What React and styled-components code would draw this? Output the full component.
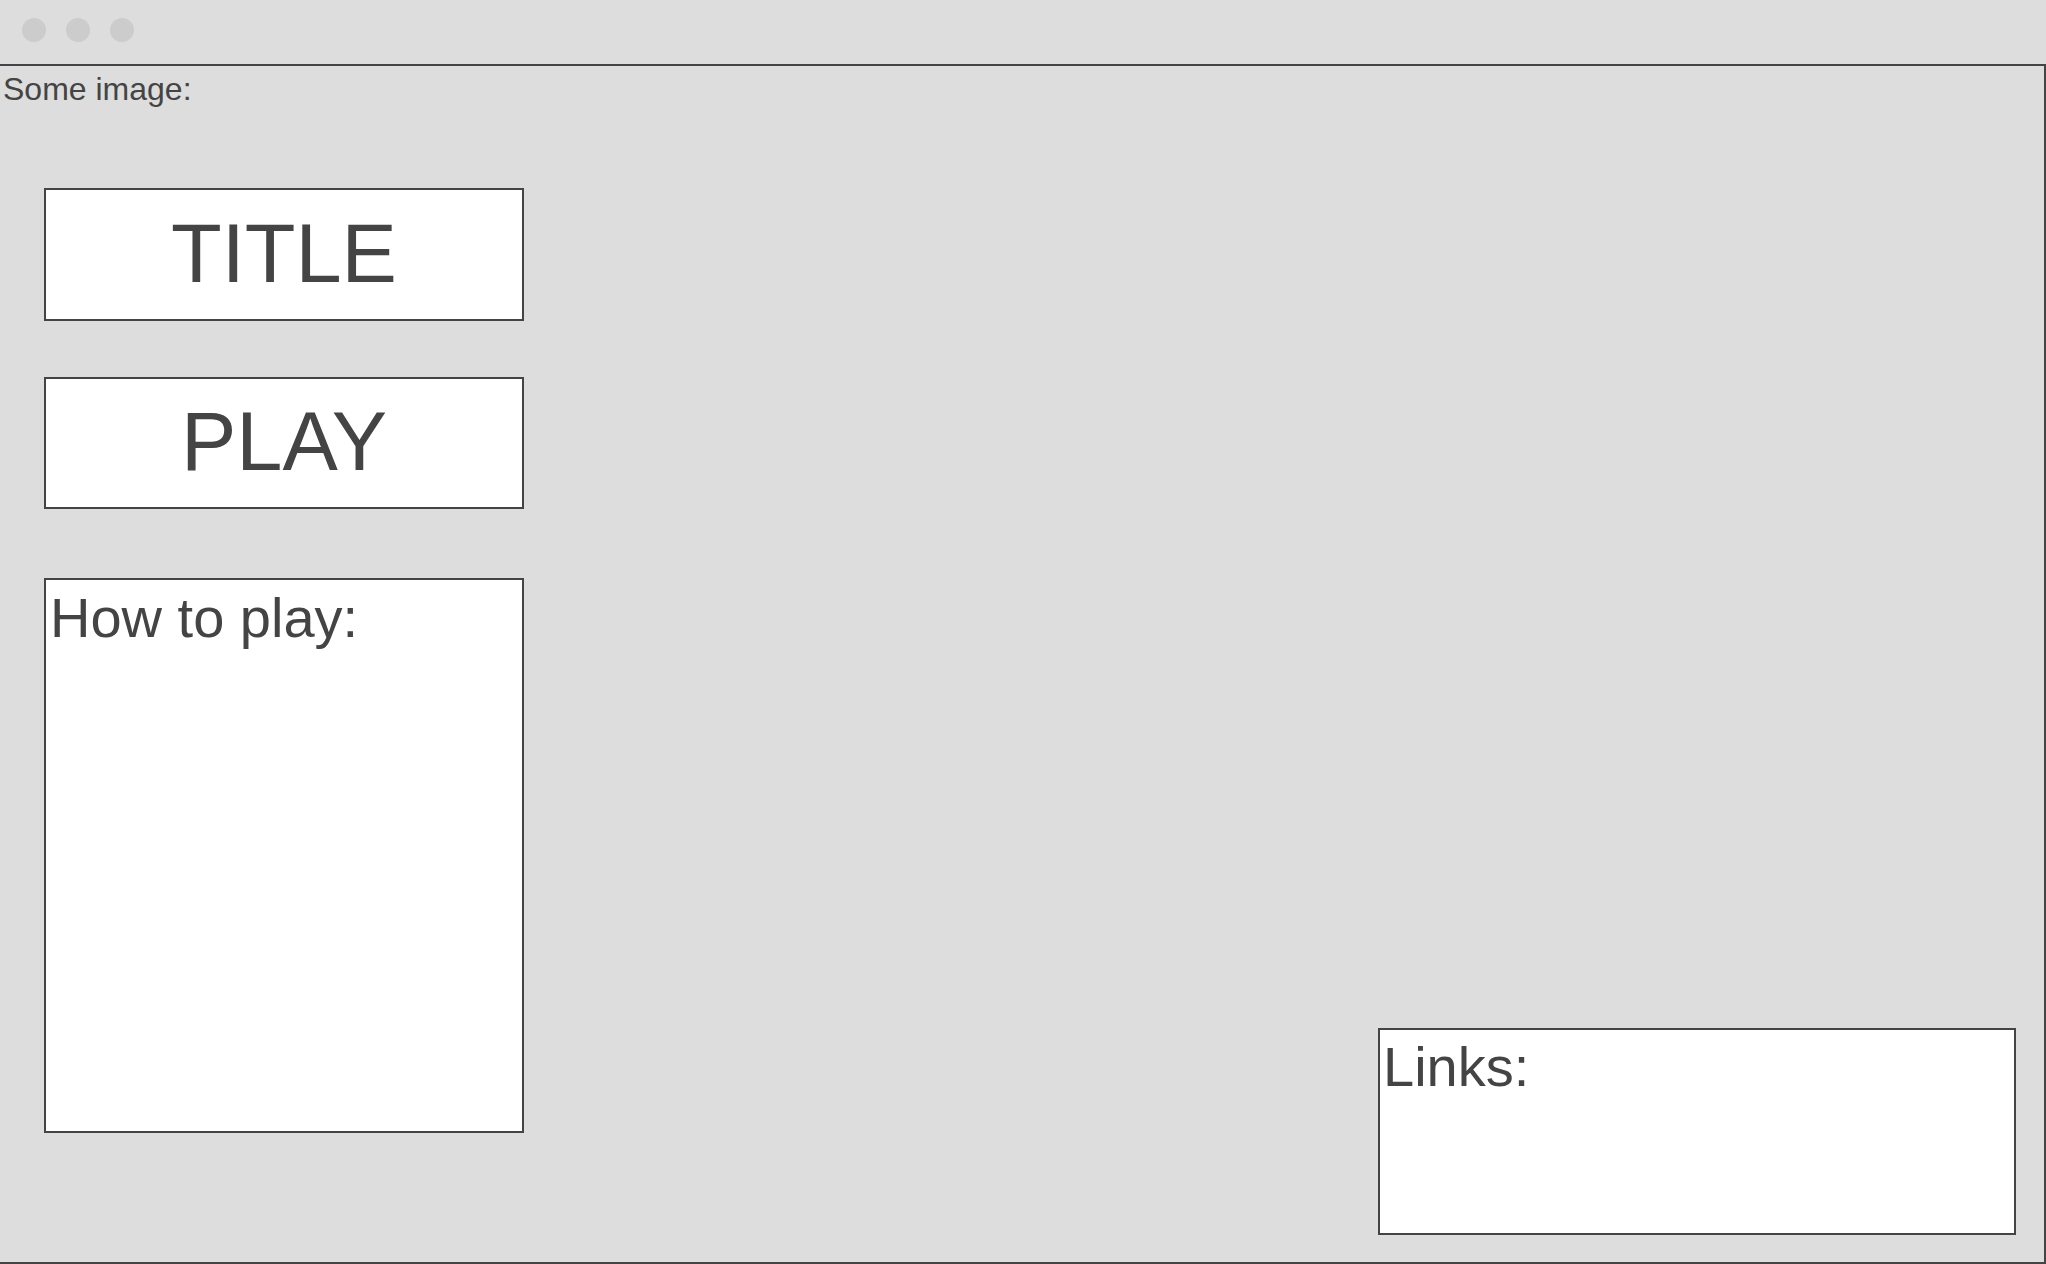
import { createGlobalStyle } from "styled-components";
import styled from "styled-components";

const GlobalStyle = createGlobalStyle`
	html, body {
		margin: 0;
		padding: 0;
		background-color: #dddddd;
		overflow: hidden;
	}
	body {
		font-family: "Liberation Sans", Arial, sans-serif;
		color: #444444;
	}
`;

const Screen = styled.div`
	width: 2046px;
	height: 1264px;
	display: flex;
	flex-direction: column;
	background-color: #dddddd;
`;

const TitleBar = styled.div`
	height: 64px;
	display: flex;
	align-items: center;
	gap: 20px;
	padding: 0 0 4px 22px;
	box-sizing: border-box;
`;

const Dot = styled.span`
	width: 24px;
	height: 24px;
	border-radius: 50%;
	background-color: #cccccc;
`;

const Frame = styled.div`
	flex: 1;
	display: flex;
	flex-direction: column;
	border: 2px solid #444444;
	border-left: none;
	min-height: 0;
`;

const ImageLabel = styled.div`
	margin: 5px 0 0 3px;
	font-size: 32px;
	line-height: 37px;
`;

const Body = styled.div`
	flex: 1;
	display: flex;
	padding: 80px 28px 27px 44px;
`;

const LeftColumn = styled.div`
	width: 480px;
	flex-shrink: 0;
	display: flex;
	flex-direction: column;
`;

const Box = styled.div`
	box-sizing: border-box;
	flex-shrink: 0;
	background-color: #ffffff;
	border: 2px solid #444444;
	width: ${(p) => p.w || "480px"};
	height: ${(p) => p.h};
	margin-top: ${(p) => p.gap || "0"};
`;

const BigButton = styled(Box)`
	display: flex;
	align-items: center;
	justify-content: center;
	font-size: 83px;
	padding-bottom: 2px;
`;

const PanelTitle = styled.div`
	font-size: 56px;
	padding: ${(p) => p.pad};
`;

const LinksBox = styled(Box)`
	align-self: flex-end;
	margin-left: auto;
`;

function App() {
	return (
		<>
			<GlobalStyle />
			<Screen>
				<TitleBar>
					<Dot />
					<Dot />
					<Dot />
				</TitleBar>
				<Frame>
					<ImageLabel>Some image:</ImageLabel>
					<Body>
						<LeftColumn>
							<BigButton h="133px">TITLE</BigButton>
							<BigButton h="132px" gap="56px">
								PLAY
							</BigButton>
							<Box h="555px" gap="69px">
								<PanelTitle pad="5px 0 0 4px">How to play:</PanelTitle>
							</Box>
						</LeftColumn>
						<LinksBox w="638px" h="207px">
							<PanelTitle pad="4px 0 0 3px">Links:</PanelTitle>
						</LinksBox>
					</Body>
				</Frame>
			</Screen>
		</>
	);
}

export default App;
